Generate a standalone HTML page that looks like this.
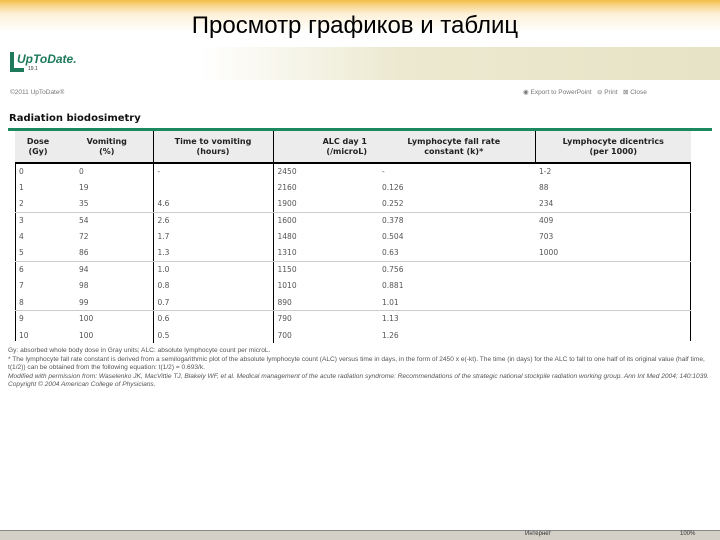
<!DOCTYPE html>
<html><head><meta charset="utf-8"><style>
*{margin:0;padding:0;box-sizing:border-box}
body{width:720px;height:540px;position:relative;background:#fff;font-family:"Liberation Sans",sans-serif;overflow:hidden}
.top{position:absolute;left:0;top:0;width:720px;height:46px;background:linear-gradient(#f2bc48 0,#f8d890 6px,#fdf1d8 14px,#fff 32px)}
.title{position:absolute;left:190px;width:330px;top:12px;text-align:center;font-size:24px;color:#000;white-space:nowrap}
.banner{position:absolute;left:0;top:47px;width:720px;height:33px;background:linear-gradient(90deg,#fff 0,#fff 200px,#ece9d0 400px,#e6e3c6 720px)}
.logo{position:absolute;left:9px;top:52px;font:italic bold 12px "Liberation Sans",sans-serif;color:#1e7a5a}
.abs{position:absolute}
.small{font-size:6.5px;color:#777}
table{position:absolute;left:15px;top:131px;width:676px;border-collapse:collapse;font-family:"DejaVu Sans",sans-serif;font-size:7.5px;color:#555}
th{background:#ececec;font-weight:bold;color:#222;height:32px;border-bottom:2px solid #000;font-size:8px;line-height:10px}
td{height:16.4px;padding-left:4px;vertical-align:middle}
.b{border-right:1.5px solid #000}
tr.g td{border-bottom:1px solid #ccc}
</style></head><body>
<div class="top"></div>
<div class="title">Просмотр графиков и таблиц</div>
<div class="banner"></div>
<div class="abs" style="left:10px;top:52px;width:4px;height:20px;background:#1e7a5a;border-radius:0 0 0 6px"></div>
<div class="abs" style="left:10px;top:68px;width:14px;height:4px;background:#1e7a5a"></div>
<div class="logo" style="left:17px">UpToDate.</div>
<div class="abs" style="left:28px;top:66px;font-size:5px;color:#333">19.1</div>
<div class="abs small" style="left:10px;top:89px">©2011 UpToDate®</div>
<div class="abs small" style="left:523px;top:88px">◉ Export to PowerPoint &nbsp; ⊖ Print &nbsp; ⊠ Close</div>
<div class="abs" style="left:9px;top:113px;font:bold 10px 'DejaVu Sans',sans-serif;color:#111">Radiation biodosimetry</div>
<div class="abs" style="left:8px;top:128px;width:704px;height:3px;background:#1a8a5e"></div>
<div class="abs" style="left:15px;top:131px;width:676px;height:210px;border-left:1.5px solid #000;border-right:1.5px solid #000"></div>
<table>
<tr><th style="width:46px;text-align:center">Dose<br>(Gy)</th><th class="b" style="width:92px;text-align:center">Vomiting<br>(%)</th><th class="b" style="width:120px">Time to vomiting<br>(hours)</th><th style="width:100px;text-align:right;padding-right:6px">ALC day 1<br>(/microL)</th><th class="b" style="width:162px">Lymphocyte fall rate<br>constant (k)*</th><th>Lymphocyte dicentrics<br>(per 1000)</th></tr>
<tr><td>0</td><td class="b" style="padding-left:18px">0</td><td class="b">-</td><td>2450</td><td style="padding-left:9px">-</td><td>1-2</td></tr>
<tr><td>1</td><td class="b" style="padding-left:18px">19</td><td class="b"></td><td>2160</td><td style="padding-left:9px">0.126</td><td>88</td></tr>
<tr class="g"><td>2</td><td class="b" style="padding-left:18px">35</td><td class="b">4.6</td><td>1900</td><td style="padding-left:9px">0.252</td><td>234</td></tr>
<tr><td>3</td><td class="b" style="padding-left:18px">54</td><td class="b">2.6</td><td>1600</td><td style="padding-left:9px">0.378</td><td>409</td></tr>
<tr><td>4</td><td class="b" style="padding-left:18px">72</td><td class="b">1.7</td><td>1480</td><td style="padding-left:9px">0.504</td><td>703</td></tr>
<tr class="g"><td>5</td><td class="b" style="padding-left:18px">86</td><td class="b">1.3</td><td>1310</td><td style="padding-left:9px">0.63</td><td>1000</td></tr>
<tr><td>6</td><td class="b" style="padding-left:18px">94</td><td class="b">1.0</td><td>1150</td><td style="padding-left:9px">0.756</td><td></td></tr>
<tr><td>7</td><td class="b" style="padding-left:18px">98</td><td class="b">0.8</td><td>1010</td><td style="padding-left:9px">0.881</td><td></td></tr>
<tr class="g"><td>8</td><td class="b" style="padding-left:18px">99</td><td class="b">0.7</td><td>890</td><td style="padding-left:9px">1.01</td><td></td></tr>
<tr><td>9</td><td class="b" style="padding-left:18px">100</td><td class="b">0.6</td><td>790</td><td style="padding-left:9px">1.13</td><td></td></tr>
<tr><td>10</td><td class="b" style="padding-left:18px">100</td><td class="b">0.5</td><td>700</td><td style="padding-left:9px">1.26</td><td></td></tr>
</table>
<div class="abs" style="left:8px;top:347px;width:704px;font-size:6.6px;line-height:8.6px;color:#555">
Gy: absorbed whole body dose in Gray units; ALC: absolute lymphocyte count per microL.<br>
* The lymphocyte fall rate constant is derived from a semilogarithmic plot of the absolute lymphocyte count (ALC) versus time in days, in the form of 2450 x e(-kt). The time (in days) for the ALC to fall to one half of its original value (half time, t(1/2)) can be obtained from the following equation: t(1/2) = 0.693/k.<br>
<i>Modified with permission from: Waselenko JK, MacVittie TJ, Blakely WF, et al. Medical management of the acute radiation syndrome: Recommendations of the strategic national stockpile radiation working group. Ann Int Med 2004; 140:1039. Copyright © 2004 American College of Physicians.</i></div>
<div class="abs" style="left:0;top:530px;width:720px;height:10px;background:#d4d0c8;border-top:1px solid #888"></div>
<div class="abs" style="left:525px;top:531px;font-size:6px;color:#333">Интернет</div>
<div class="abs" style="left:680px;top:531px;font-size:6px;color:#333">100%</div>
</body></html>
